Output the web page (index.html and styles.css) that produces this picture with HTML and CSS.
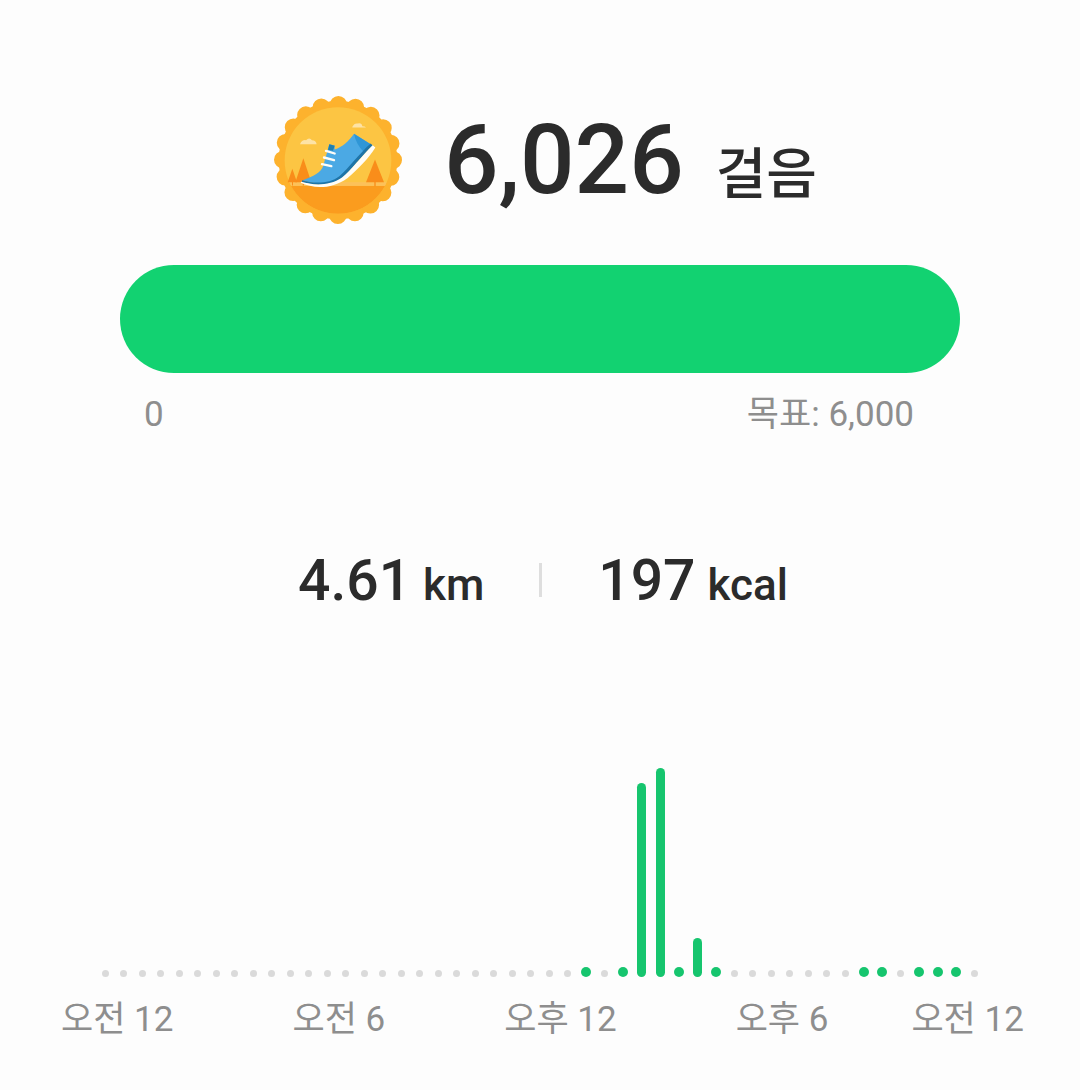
FILE: index.html
```html
<!DOCTYPE html>
<html lang="ko">

<head>
    <meta charset="UTF-8">
    <meta name="viewport" content="width=device-width, initial-scale=1.0">
    <title>걸음</title>
    <link rel="stylesheet" href="styles.css">
</head>

<body>
    <main class="steps-page">
        <!-- Step count with badge -->
        <header class="summary">
            <svg class="badge" viewBox="39 28.5 390 390" aria-hidden="true">
                <defs>
                    <clipPath id="badgeInner">
                        <circle cx="234" cy="225" r="160"></circle>
                    </clipPath>
                </defs>
                <circle cx="234" cy="223.5" r="178" fill="#fdb22d"></circle>
                <circle cx="234" cy="223.5" r="166" fill="none" stroke="#fdb22d" stroke-width="52" stroke-linecap="round" stroke-dasharray="0 52.15"></circle>
                <circle cx="234" cy="225" r="160" fill="#fcc543"></circle>
                <g clip-path="url(#badgeInner)">
                    <rect x="60" y="301" width="350" height="110" fill="#fb9c1e"></rect>
                    <rect x="70" y="290" width="310" height="11" fill="#fcc15a"></rect>
                </g>
                <path d="M120 176q6-14 18-12 10-10 18 0 12 0 14 12z" fill="#fde3a6"></path>
                <path d="M277 124q6-12 16-10 12-4 14 8 8 0 11 4h-41z" fill="#fde3a6"></path>
                <path d="M130 218l24 72h-48z" fill="#f98d1a"></path>
                <path d="M97 250l14 40h-28z" fill="#f98d1a"></path>
                <path d="M345 222l27 68h-54z" fill="#f98d1a"></path>
                <path d="M343 288h4v14h-4zM128 288h4v12h-4zM96 288h3v12h-3z" fill="#f98d1a"></path>
                <path d="M128 284C160 272 184 262 190 240L208 176 224 180 224 192C246 186 268 166 282 145L332 176 300 214C270 254 240 286 200 292 170 296 145 290 128 284z" fill="#4ba9e4"></path>
                <path d="M282 145L332 176 310 198C296 184 286 166 282 145z" fill="#2f96d6"></path>
                <path d="M126 284C160 294 208 296 238 272 268 246 296 206 332 174L338 180C304 212 274 254 246 278 208 304 160 300 126 290z" fill="#1f75a8"></path>
                <path d="M124 289C160 300 208 302 246 276 274 254 304 212 338 179L346 186C325 220 295 250 262 278 215 312 160 310 122 292z" fill="#fffdf7"></path>
                <path d="M208 176l16 5-5 15-15-3z" fill="#1f7fae"></path>
                <path d="M198 196l26 8M192 216l30 8M186 236l28 6" fill="none" stroke="#fffdf7" stroke-width="7" stroke-linecap="round"></path>
            </svg>
            <span class="step-count">6,026</span>
            <span class="step-unit">걸음</span>
        </header>

        <!-- Goal progress -->
        <section class="goal">
            <div class="goal-bar"></div>
            <div class="goal-labels">
                <span>0</span>
                <span>목표: 6,000</span>
            </div>
        </section>

        <!-- Distance and calories -->
        <section class="stats">
            <div class="stat"><span class="stat-value">4.61</span><span class="stat-unit">km</span></div>
            <div class="stat-divider"></div>
            <div class="stat"><span class="stat-value">197</span><span class="stat-unit">kcal</span></div>
        </section>

        <!-- Steps per half hour -->
        <section class="chart">
            <div class="chart-bars">
                <i class="dot"></i><i class="dot"></i><i class="dot"></i><i class="dot"></i>
                <i class="dot"></i><i class="dot"></i><i class="dot"></i><i class="dot"></i>
                <i class="dot"></i><i class="dot"></i><i class="dot"></i><i class="dot"></i>
                <i class="dot"></i><i class="dot"></i><i class="dot"></i><i class="dot"></i>
                <i class="dot"></i><i class="dot"></i><i class="dot"></i><i class="dot"></i>
                <i class="dot"></i><i class="dot"></i><i class="dot"></i><i class="dot"></i>
                <i class="dot"></i><i class="dot"></i>
                <i class="dot active"></i><i class="dot"></i><i class="dot active"></i>
                <i class="bar" style="height: 194px"></i>
                <i class="bar" style="height: 209px"></i>
                <i class="dot active"></i>
                <i class="bar" style="height: 39px"></i>
                <i class="dot active"></i>
                <i class="dot"></i><i class="dot"></i><i class="dot"></i><i class="dot"></i>
                <i class="dot"></i><i class="dot"></i><i class="dot"></i>
                <i class="dot active"></i><i class="dot active"></i><i class="dot"></i>
                <i class="dot active"></i><i class="dot active"></i><i class="dot active"></i>
                <i class="dot"></i>
            </div>
            <div class="chart-labels">
                <span>오전 12</span>
                <span>오전 6</span>
                <span>오후 12</span>
                <span>오후 6</span>
                <span class="last-label">오전 12</span>
            </div>
        </section>
    </main>
</body>

</html>
```

FILE: styles.css
```css
/* Page */
body {
    margin: 0;
    background-color: #fdfdfd;
    font-family: Roboto, 'Noto Sans CJK KR', sans-serif;
    color: #2b2b2b;
}

.steps-page {
    width: 1080px;
    height: 1090px;
    overflow: hidden;
}

/* Step count */
.summary {
    display: flex;
    align-items: center;
    height: 130px;
    padding: 95px 0 0 273px;
}

.badge {
    width: 130px;
    height: 130px;
    flex-shrink: 0;
}

.step-count {
    margin-left: 41px;
    font-size: 96px;
    font-weight: 500;
    line-height: 130px;
}

.step-unit {
    margin: 28px 0 0 32px;
    font-size: 55px;
    font-weight: 500;
    line-height: 60px;
}

/* Goal */
.goal {
    margin: 40px 120px 0;
}

.goal-bar {
    height: 108px;
    border-radius: 54px;
    background-color: #12d271;
}

.goal-labels {
    display: flex;
    justify-content: space-between;
    padding: 20px 46px 0 24px;
    font-size: 35px;
    line-height: 44px;
    color: #8e8e8e;
}

/* Distance and calories */
.stats {
    display: flex;
    align-items: center;
    justify-content: flex-start;
    margin-top: 109px;
    height: 68px;
    padding-left: 298px;
}

.stat-value {
    font-size: 57px;
    font-weight: 500;
}

.stat-unit {
    margin-left: 12px;
    font-size: 44px;
    font-weight: 500;
}

.stat-divider {
    width: 3px;
    height: 34px;
    margin: 0 56px 0 55px;
    background-color: #dedede;
}

/* Chart */
.chart {
    margin-top: 151px;
}

.chart-bars {
    display: flex;
    align-items: flex-end;
    justify-content: space-between;
    height: 212px;
    margin: 0 100px;
}

.dot,
.bar {
    display: block;
    flex-shrink: 0;
}

.dot {
    width: 7px;
    height: 7px;
    margin: 0 1.5px;
    border-radius: 50%;
    background-color: #dadada;
}

.dot.active {
    width: 10px;
    height: 10px;
    margin: 0;
    background-color: #16c56e;
}

.bar {
    width: 9px;
    margin: 0 0.5px;
    border-radius: 5px;
    background-color: #16c56e;
}

.chart-labels {
    display: flex;
    gap: 119px;
    padding: 21px 0 0 61px;
    font-size: 35px;
    line-height: 44px;
    color: #8e8e8e;
    white-space: nowrap;
}

.chart-labels .last-label {
    margin-left: -36px;
}
```
